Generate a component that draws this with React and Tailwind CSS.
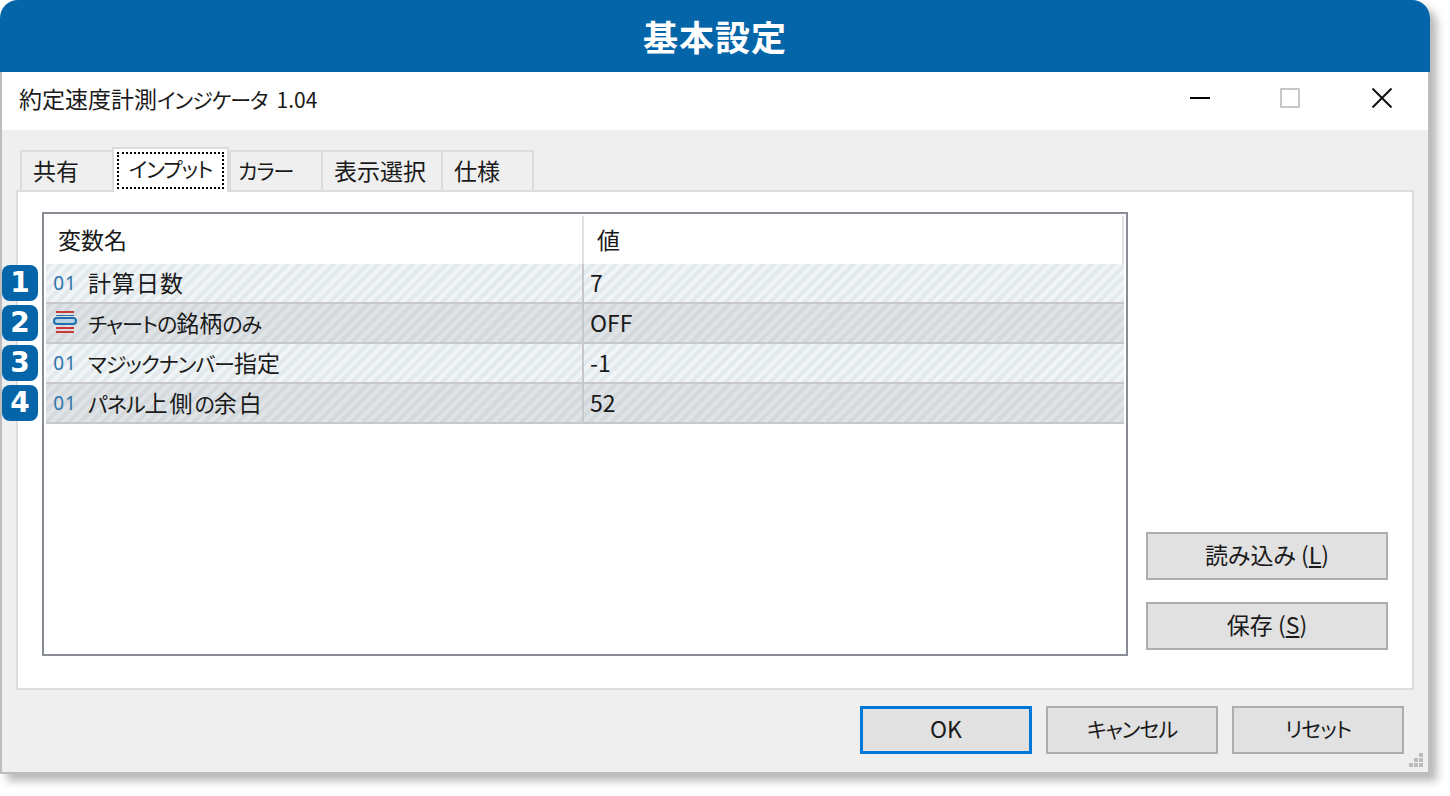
import React from 'react';

// kana in the reference font runs narrower than the kanji
const Kana = ({ children }) => <span className="text-[21px] tracking-[-1px]">{children}</span>;

const rows = [
  { id: 1, name: <span className="tracking-[1px]">計算日数</span>, value: '7', type: 'num' },
  { id: 2, name: <><Kana>チャートの</Kana>銘柄<Kana>のみ</Kana></>, value: 'OFF', type: 'enum' },
  { id: 3, name: <><Kana>マジックナンバー</Kana>指定</>, value: '-1', type: 'num' },
  { id: 4, name: <span className="tracking-[2px]"><Kana>パネル</Kana>上側<Kana>の</Kana>余白</span>, value: '52', type: 'num' },
];

const tabs = [<>共有</>, <Kana>インプット</Kana>, <Kana>カラー</Kana>, <>表示選択</>, <>仕様</>];
const tabWidths = ['w-[92px]', 'w-[117px]', 'w-[92px]', 'w-[120px]', 'w-[93px]'];

const EnumIcon = () => (
  <svg width="24" height="24" viewBox="0 0 24 24" className="shrink-0">
    <rect x="3" y="1" width="18" height="2" fill="#c8373a" />
    <rect x="3" y="5" width="18" height="1" fill="#2f75a8" />
    <rect x="3" y="17" width="18" height="2" fill="#c8373a" />
    <rect x="3" y="21" width="18" height="2" fill="#c8373a" />
    <rect x="1" y="8" width="22" height="6" rx="3" fill="#b9d3e6" stroke="#1f6fb0" strokeWidth="2" />
  </svg>
);

const TableRow = ({ row, index }) => {
  const stripes =
    index % 2 === 0
      ? 'bg-[repeating-linear-gradient(-45deg,#e3eaee_0,#e3eaee_4px,#f1f4f6_4px,#f1f4f6_8px)]'
      : 'bg-[repeating-linear-gradient(-45deg,#d3d9dc_0,#d3d9dc_4px,#e0e3e5_4px,#e0e3e5_8px)]';

  return (
    <div className={`relative flex h-10 border-b-2 border-[#c8c8c8] ${stripes}`}>
      {/* number badge hangs out of the table on the left */}
      <div className="absolute left-[-44px] top-[1px] flex h-9 w-9 items-center justify-center rounded-lg bg-[#0565a9] font-['DejaVu_Sans',sans-serif] text-[28px] font-bold leading-none text-white">
        {row.id}
      </div>
      <div className="flex w-[538px] items-center gap-[11px] border-r-2 border-[#c8c8c8] pb-[2px] pl-[7px]">
        <div className="flex w-6 justify-center">
          {row.type === 'num' ? (
            <span className="translate-y-[1px] font-['Noto_Sans',sans-serif] text-[19px] leading-none tracking-[1px] text-[#2f75a8]">01</span>
          ) : (
            <EnumIcon />
          )}
        </div>
        <span className="whitespace-nowrap text-[23px] leading-none">{row.name}</span>
      </div>
      <div className="flex flex-1 items-center pb-[2px] pl-[6px] text-[23px] leading-none">{row.value}</div>
    </div>
  );
};

const GreyButton = ({ className, children }) => (
  <button className={`flex h-12 items-center justify-center border-2 bg-[#e1e1e1] pb-[4px] text-[23px] leading-none ${className}`}>
    {children}
  </button>
);

const App = () => {
  return (
    <div className="h-[796px] w-[1450px] overflow-hidden bg-white font-['Noto_Sans_CJK_JP','Noto_Sans',sans-serif] text-[#1a1a1a] [font-feature-settings:'palt']">
      <div className="flex h-[774px] w-[1430px] flex-col overflow-hidden rounded-t-[18px] shadow-[7px_7px_9px_rgba(0,0,0,0.28)]">
        {/* Page heading */}
        <div className="flex h-[72px] shrink-0 items-center justify-center bg-[#0565a9] text-[35px] font-bold tracking-[1px] text-white">
          基本設定
        </div>

        <div className="flex min-h-0 flex-1 flex-col border-x-2 border-b-2 border-[#bdbdbd]">
          {/* Title bar */}
          <div className="flex h-[58px] shrink-0 items-center bg-white pb-[6px] pl-[17px]">
            <span className="text-[23px] leading-none">
              約定速度計測<Kana>インジケータ</Kana> <span className="ml-[4px] text-[21px]">1.04</span>
            </span>
            <div className="ml-auto flex items-center pr-9">
              <div className="h-[2px] w-5 bg-black" />
              <div className="ml-[70px] h-5 w-5 border-2 border-[#c8c8c8]" />
              <svg width="20" height="20" viewBox="0 0 20 20" className="ml-[72px]">
                <path d="M0.5 0.5L19.5 19.5M19.5 0.5L0.5 19.5" stroke="#111" strokeWidth="2" />
              </svg>
            </div>
          </div>

          <div className="flex min-h-0 flex-1 flex-col bg-[#efefef] px-[14px] pt-[17px]">
            {/* Tabs */}
            <div className="relative z-10 flex h-[45px] shrink-0 items-end pl-[4px]">
              {tabs.map((tab, i) =>
                i === 1 ? (
                  <div key={i} className={`flex h-[45px] items-center justify-center border-2 border-b-0 border-[#dcdcdc] bg-white p-[3px] ${tabWidths[i]}`}>
                    <div className="flex h-full w-full items-center justify-center whitespace-nowrap border-2 border-dotted border-black pb-1 text-[23px] leading-none">
                      {tab}
                    </div>
                  </div>
                ) : (
                  <div key={i} className={`flex h-[42px] items-center whitespace-nowrap border-2 border-r-0 border-[#dcdcdc] pb-[2px] text-[23px] leading-none last:border-r-2 ${i === 2 ? 'pl-[7px]' : 'pl-[11px]'} ${tabWidths[i]}`}>
                    {tab}
                  </div>
                ),
              )}
            </div>

            {/* Tab panel */}
            <div className="-mt-[2px] flex h-[500px] shrink-0 border-2 border-[#dcdcdc] bg-white pl-6 pt-5">
              <div className="h-[444px] w-[1086px] shrink-0 border-2 border-[#888c94] p-[2px]">
                <div className="flex h-[48px] text-[23px] leading-none">
                  <div className="flex w-[538px] items-center border-r-2 border-[#e0e0e0] pb-[2px] pl-3">変数名</div>
                  <div className="flex flex-1 items-center border-r-2 border-[#e0e0e0] pb-[2px] pl-[13px]">値</div>
                </div>
                {rows.map((row, i) => (
                  <TableRow key={row.id} row={row} index={i} />
                ))}
              </div>
              <div className="ml-[18px] flex h-[438px] w-[242px] shrink-0 flex-col justify-end gap-[22px]">
                <GreyButton className="border-[#adadad]">
                  読み込み (<span className="underline">L</span>)
                </GreyButton>
                <GreyButton className="border-[#adadad]">
                  保存 (<span className="underline">S</span>)
                </GreyButton>
              </div>
            </div>

            {/* Dialog buttons */}
            <div className="relative flex flex-1 justify-end gap-[14px] pr-[10px] pt-4">
              <GreyButton className="w-[172px] border-[3px] border-[#0078d7]">OK</GreyButton>
              <GreyButton className="w-[172px] border-[#adadad]"><Kana>キャンセル</Kana></GreyButton>
              <GreyButton className="w-[172px] border-[#adadad]"><Kana>リセット</Kana></GreyButton>
              {/* resize grip */}
              <svg width="16" height="16" viewBox="0 0 16 16" className="absolute bottom-[4px] right-[-10px]" fill="#bcbcbc">
                <rect x="11" y="1" width="4" height="4" />
                <rect x="6" y="6" width="4" height="4" />
                <rect x="11" y="6" width="4" height="4" />
                <rect x="1" y="11" width="4" height="4" />
                <rect x="6" y="11" width="4" height="4" />
                <rect x="11" y="11" width="4" height="4" />
              </svg>
            </div>
          </div>
        </div>
      </div>
    </div>
  );
};

export default App;
